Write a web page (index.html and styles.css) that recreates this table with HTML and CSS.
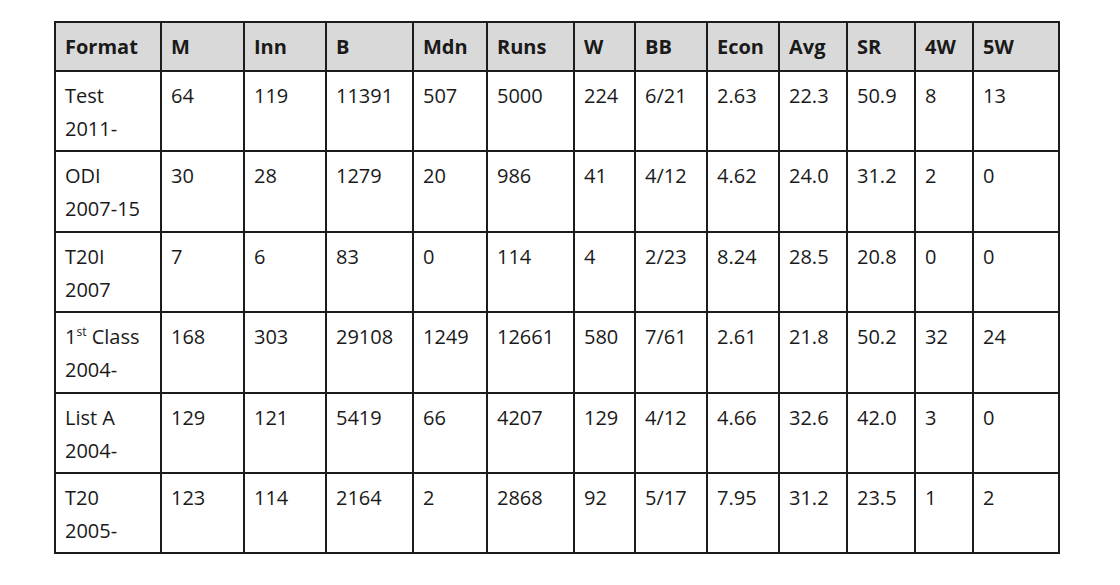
FILE: index.html
```html
<!DOCTYPE html>
<html lang="en">
<head>
<meta charset="utf-8">
<title>Bowling career statistics</title>
<link rel="stylesheet" href="styles.css">
</head>
<body>
<table class="stats">
  <colgroup>
    <col class="c-format"><col class="c-m"><col class="c-inn"><col class="c-b"><col class="c-mdn"><col class="c-runs"><col class="c-w"><col class="c-bb"><col class="c-econ"><col class="c-avg"><col class="c-sr"><col class="c-4w"><col class="c-5w">
  </colgroup>
  <thead>
    <tr>
      <th>Format</th><th>M</th><th>Inn</th><th>B</th><th>Mdn</th><th>Runs</th><th>W</th><th>BB</th><th>Econ</th><th>Avg</th><th>SR</th><th>4W</th><th>5W</th>
    </tr>
  </thead>
  <tbody>
    <tr>
      <td>Test<br>2011-</td><td>64</td><td>119</td><td>11391</td><td>507</td><td>5000</td><td>224</td><td>6/21</td><td>2.63</td><td>22.3</td><td>50.9</td><td>8</td><td>13</td>
    </tr>
    <tr>
      <td>ODI<br>2007-15</td><td>30</td><td>28</td><td>1279</td><td>20</td><td>986</td><td>41</td><td>4/12</td><td>4.62</td><td>24.0</td><td>31.2</td><td>2</td><td>0</td>
    </tr>
    <tr>
      <td>T20I<br>2007</td><td>7</td><td>6</td><td>83</td><td>0</td><td>114</td><td>4</td><td>2/23</td><td>8.24</td><td>28.5</td><td>20.8</td><td>0</td><td>0</td>
    </tr>
    <tr>
      <td>1<sup>st</sup> Class<br>2004-</td><td>168</td><td>303</td><td>29108</td><td>1249</td><td>12661</td><td>580</td><td>7/61</td><td>2.61</td><td>21.8</td><td>50.2</td><td>32</td><td>24</td>
    </tr>
    <tr>
      <td>List A<br>2004-</td><td>129</td><td>121</td><td>5419</td><td>66</td><td>4207</td><td>129</td><td>4/12</td><td>4.66</td><td>32.6</td><td>42.0</td><td>3</td><td>0</td>
    </tr>
    <tr>
      <td>T20<br>2005-</td><td>123</td><td>114</td><td>2164</td><td>2</td><td>2868</td><td>92</td><td>5/17</td><td>7.95</td><td>31.2</td><td>23.5</td><td>1</td><td>2</td>
    </tr>
  </tbody>
</table>
</body>
</html>
```

FILE: styles.css
```css
html, body {
  margin: 0;
  padding: 0;
  background: #ffffff;
}

body {
  padding: 21px 0 0 54px;
  font-family: "Open Sans", "Liberation Sans", sans-serif;
  color: #1a1a1a;
}

.stats {
  border-collapse: collapse;
  table-layout: fixed;
  width: 1004px;
  font-size: 20px;
  line-height: 33px;
}

.c-format { width: 106px; }
.c-m { width: 83px; }
.c-inn { width: 82px; }
.c-b { width: 87px; }
.c-mdn { width: 74px; }
.c-runs { width: 87px; }
.c-w { width: 61px; }
.c-bb { width: 72px; }
.c-econ { width: 72px; }
.c-avg { width: 68px; }
.c-sr { width: 68px; }
.c-4w { width: 58px; }
.c-5w { width: 86px; }

.stats th,
.stats td {
  border: 2px solid #1c1c1c;
  text-align: left;
  white-space: nowrap;
  padding: 0 0 0 9px;
}

.stats th {
  background: #d9d9d9;
  font-weight: 700;
  height: 47px;
  vertical-align: middle;
}

.stats td {
  vertical-align: top;
  padding-top: 7px;
  padding-bottom: 5.4px;
}

.stats sup {
  font-size: 12px;
  line-height: 0;
  vertical-align: 8px;
}
```
